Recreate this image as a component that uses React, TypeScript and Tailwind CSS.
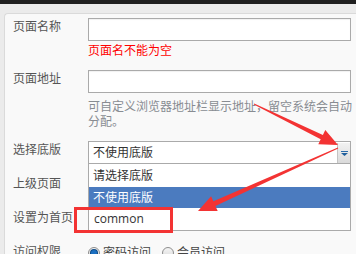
import type { ReactNode } from 'react'

function Row({ label, children, className = '' }: { label: string; children?: ReactNode; className?: string }) {
  return (
    <div className={`flex ${className}`}>
      <div className="w-[75px] shrink-0 text-[12px] leading-[18px] text-[#555]">{label}</div>
      <div className="w-[263px] shrink-0">{children}</div>
    </div>
  )
}

function TextInput() {
  return <div className="h-[23px] border border-[#aaa] bg-white shadow-[inset_0_1px_1px_rgba(0,0,0,0.06)]" />
}

function Radio({ checked }: { checked?: boolean }) {
  return (
    <span className="flex h-[12px] w-[12px] items-center justify-center rounded-full border border-[#8e8e8e] bg-gradient-to-b from-[#f4f4f4] to-[#dcdcdc]">
      {checked && <span className="h-[6px] w-[6px] rounded-full bg-[#1c6fc0] shadow-[0_0_0_1px_#0d4a87]" />}
    </span>
  )
}

export default function App() {
  return (
    <div className="relative h-[254px] w-[356px] overflow-hidden bg-[#ebebeb] font-['Open_Sans','Noto_Sans_CJK_SC',sans-serif]">
      <div className="h-[4px] bg-[#1f1f1f]" />
      <div className="pl-[4px] pt-[9px]">
        <div className="w-[400px] rounded-tl-[4px] border-l border-t border-[#dadada] bg-[#f9f9f9] pl-[8px] pt-[4px] pb-[40px]">
          <Row label="页面名称">
            <TextInput />
            <div className="mt-[1px] text-[12px] leading-[18px] text-[#ff0000]">页面名不能为空</div>
          </Row>

          <Row label="页面地址" className="mt-[10px]">
            <TextInput />
            <div className="mt-[6px] w-[266px] text-[12px] leading-[15px] text-[#888c92]">
              可自定义浏览器地址栏显示地址，留空系统会自动分配。
            </div>
          </Row>

          <Row label="选择底版" className="mt-[12px]">
            <div className="relative">
              <div className="relative h-[23px] border border-[#aaa] bg-white pl-[4px] text-[12px] leading-[21px] text-[#333]">
                不使用底版
                <div className="absolute right-0 top-[1px] bottom-0 flex w-[13px] items-center justify-center border-l border-[#c4c4c4] bg-gradient-to-b from-[#f2f2f2] to-[#dadada]">
                  <svg width="7" height="5" viewBox="0 0 7 5">
                    <rect x="0" y="0" width="7" height="1" fill="#2a6aa8" />
                    <polygon points="0,2 7,2 3.5,5" fill="#1f5f9c" />
                  </svg>
                </div>
              </div>
              <div className="absolute left-0 top-[23px] z-10 w-[263px] border-x border-b border-[#aaa] bg-white text-[12px]">
                <div className="h-[23px] pl-[4px] leading-[23px] text-[#333]">请选择底版</div>
                <div className="h-[21px] bg-[#4b7bbf] pl-[4px] leading-[21px] text-white">不使用底版</div>
                <div className="h-[22px] pl-[5px] leading-[22px] text-[#333]">common</div>
              </div>
            </div>
          </Row>

          <Row label="上级页面" className="mt-[11px]">
            <TextInput />
          </Row>

          <Row label="设置为首页" className="mt-[11px]">
            <div className="h-[23px]" />
          </Row>

          <Row label="访问权限" className="mt-[11px]">
            <div className="flex items-center pt-[1px] text-[12px] leading-[18px] text-[#444]">
              <Radio checked />
              <span className="ml-[3px]">密码访问</span>
              <span className="ml-[11px]">
                <Radio />
              </span>
              <span className="ml-[3px]">会员访问</span>
            </div>
          </Row>
        </div>
      </div>

      <svg className="pointer-events-none absolute left-0 top-0 z-20" width="356" height="254" viewBox="0 0 356 254">
        <rect x="75.5" y="208.5" width="96" height="23" fill="none" stroke="#f33333" strokeWidth="3" />
        <polygon
          points="253.8,104.4 320.7,139.3 318.3,144.3 338,145 325.3,129.9 322.9,134.9 254.2,103.6"
          fill="#f33333"
        />
        <polygon
          points="337.8,147.5 213.4,201.3 211.1,196.3 198,211 217.7,210.9 215.4,205.9 338.2,148.5"
          fill="#f33333"
        />
      </svg>
    </div>
  )
}
